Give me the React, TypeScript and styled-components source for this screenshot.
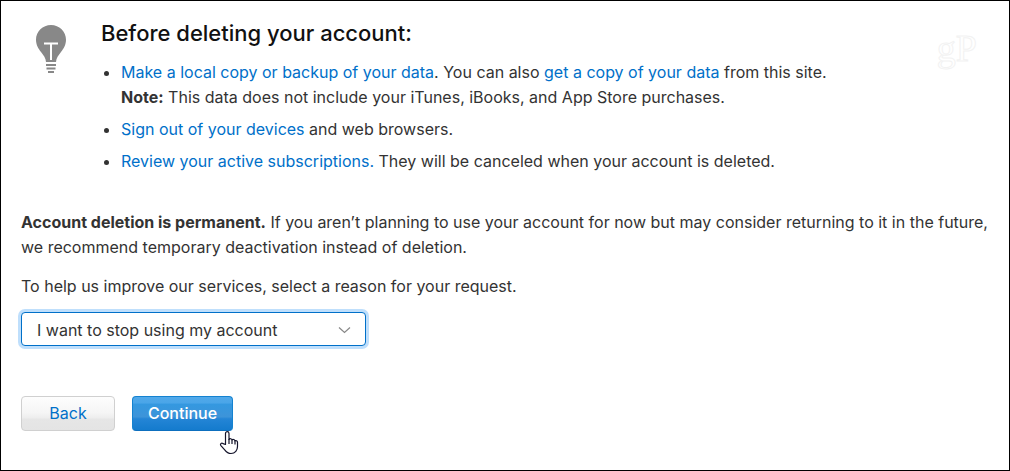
import React, { useState } from "react";
import styled, { createGlobalStyle, css } from "styled-components";

const GlobalStyle = createGlobalStyle`
  *, *::before, *::after { box-sizing: border-box; }
  body {
    margin: 0;
    background: #fff;
    color: #333;
    font: 400 16px/25px Inter, "Liberation Sans", sans-serif;
  }
`;

const Page = styled.main`
  position: relative;
  min-height: 100vh;
  padding: 17px 8px 38px 20px;
  border: 1px solid #000;
`;

const Advice = styled.section`
  display: flex;
  align-items: flex-start;
  gap: 35px;
  padding-left: 15px;
`;

const Bulb = styled.svg`
  flex: none;
  width: 30px;
  height: 49px;
  margin-top: 7px;
`;

const Title = styled.h1`
  margin: 0 0 12px;
  color: #111;
  font-size: 22px;
  font-weight: 500;
  line-height: 30px;
`;

const Tips = styled.ul`
  display: grid;
  gap: 7px;
  margin: 0;
  padding-left: 20px;
`;

const Link = styled.a`
  color: #0070c9;
  text-decoration: none;

  &:hover { text-decoration: underline; }
`;

const Strong = styled.strong`
  font-weight: 700;
`;

const Form = styled.form`
  margin-top: 36px;
`;

const Paragraph = styled.p`
  margin: 0 0 14px;
`;

const Label = styled.label`
  display: block;
  margin-bottom: 13px;
`;

const SelectBox = styled.div`
  position: relative;
  width: 345px;
  max-width: 100%;
`;

const Select = styled.select`
  display: block;
  width: 100%;
  height: 34px;
  padding: 2px 40px 0 15px;
  appearance: none;
  border: 1px solid #0070c9;
  border-radius: 4px;
  outline: none;
  background: #fff;
  box-shadow: 0 0 0 3px #bfdffc;
  color: #333;
  font: inherit;
`;

const Chevron = styled.svg`
  position: absolute;
  top: 14px;
  right: 15px;
  width: 13px;
  height: 8px;
  pointer-events: none;
`;

const Actions = styled.div`
  display: flex;
  gap: 17px;
  margin-top: 50px;
`;

const primary = css`
  border-color: #1482d0 #1482d0 #0d6fbe;
  background: linear-gradient(#51a9ea 0%, #4aa5e8 18%, #3498e0 22%, #3d94d9 60%, #2485d6 66%, #147bcd 100%);
  color: #fff;
`;

const secondary = css`
  border-color: #d0d0d0;
  background: linear-gradient(#fdfdfd 0%, #f5f5f5 48%, #eeeeee 62%, #e6e6e6 68%, #e4e4e4 100%);
  color: #0070c9;
`;

const Button = styled.button<{ $primary?: boolean }>`
  position: relative;
  min-width: ${(p) => (p.$primary ? 101 : 94)}px;
  height: 35px;
  padding: 0 14px;
  border: 1px solid;
  border-radius: 4px;
  font: inherit;
  font-weight: ${(p) => (p.$primary ? 500 : 400)};
  cursor: pointer;
  ${(p) => (p.$primary ? primary : secondary)}
`;

const Pointer = styled.svg`
  position: absolute;
  right: -7px;
  bottom: -26px;
  width: 20px;
  height: 26px;
`;

const Watermark = styled.div`
  position: absolute;
  top: 25px;
  right: 32px;
  color: #fff;
  font: 38px/44px "Liberation Serif", serif;
  -webkit-text-stroke: 1px #f2f2f2;
`;

const reasons = [
  "I want to stop using my account",
  "I have more than one account",
  "I prefer not to say",
];

export default function App() {
  const [reason, setReason] = useState(reasons[0]);

  return (
    <Page>
      <GlobalStyle />
      <Watermark aria-hidden="true">gP</Watermark>
      <Advice>
        <Bulb viewBox="0 0 30 49" aria-hidden="true">
          <path
            d="M15 0C6.700 0 0 6.600 0 14.800c0 5.200 2.300 8.700 5 12.200 2.600 3.400 4.800 6.200 5 10h10c.2-3.800 2.400-6.600 5-10 2.700-3.500 5-7 5-12.200C30 6.600 23.300 0 15 0z"
            fill="#888"
          />
          <path d="M8 18.500h14M15 18.500v16.500" stroke="#fff" strokeWidth="2" fill="none" />
          <path d="M10 40h10M10.500 43.500h9M12 47h6" stroke="#888" strokeWidth="2" fill="none" />
        </Bulb>
        <div>
          <Title>Before deleting your account:</Title>
          <Tips>
            <li>
              <Link href="#backup">Make a local copy or backup of your data</Link>. You can also{" "}
              <Link href="#copy">get a copy of your data</Link> from this site.
              <br />
              <Strong>Note:</Strong> This data does not include your iTunes, iBooks, and App Store purchases.
            </li>
            <li>
              <Link href="#devices">Sign out of your devices</Link> and web browsers.
            </li>
            <li>
              <Link href="#subscriptions">Review your active subscriptions.</Link> They will be canceled when your
              account is deleted.
            </li>
          </Tips>
        </div>
      </Advice>
      <Form onSubmit={(e) => e.preventDefault()}>
        <Paragraph>
          <Strong>Account deletion is permanent.</Strong> If you aren’t planning to use your account for now but may
          consider returning to it in the future, we recommend temporary deactivation instead of deletion.
        </Paragraph>
        <Label htmlFor="reason">To help us improve our services, select a reason for your request.</Label>
        <SelectBox>
          <Select id="reason" value={reason} onChange={(e) => setReason(e.target.value)}>
            {reasons.map((r) => (
              <option key={r}>{r}</option>
            ))}
          </Select>
          <Chevron viewBox="0 0 13 8" aria-hidden="true">
            <path d="M1 1.500l5.500 5 5.500-5" fill="none" stroke="#888" strokeWidth="1.200" />
          </Chevron>
        </SelectBox>
        <Actions>
          <Button type="button">Back</Button>
          <Button type="submit" $primary>
            Continue
            <Pointer viewBox="0 0 20 26" aria-hidden="true">
              <path
                d="M6.500 14.500V3.500c0-2.500 3.500-2.500 3.500 0v6c.5-1.200 2.700-1 3 .5.700-.9 2.600-.6 2.900.8.900-.6 2.600-.1 2.600 1.500v4.200c0 3.700-2.300 7-6.500 7-3.300 0-4.800-1.700-6.300-3.700L1.700 15.300c-.9-1.600 1-2.800 2.300-1.700z"
                fill="#fff"
                stroke="#14142b"
                strokeWidth="1.200"
                strokeLinejoin="round"
              />
              <path d="M10 9v5M13 10v4M16 11v3.500" stroke="#14142b" strokeWidth="1.200" fill="none" />
            </Pointer>
          </Button>
        </Actions>
      </Form>
    </Page>
  );
}
